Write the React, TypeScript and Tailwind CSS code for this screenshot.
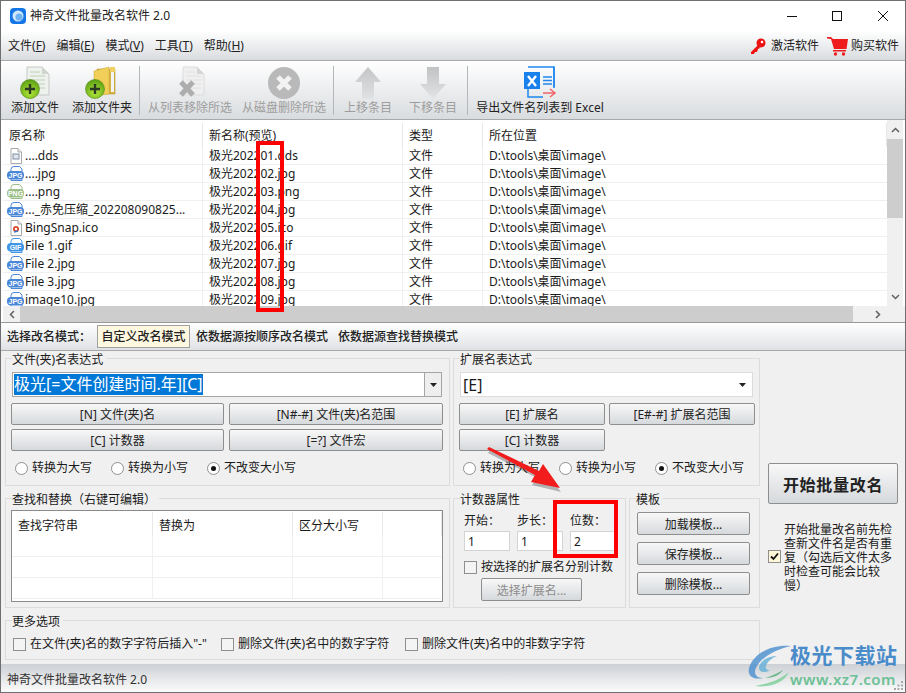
import React from 'react';

// ── Données ────────────────────────────────────────────────────────────────
const rows = [
  { name: '....dds', ext: 'dds', kind: 'doc' },
  { name: '....jpg', ext: 'jpg', kind: 'JPG' },
  { name: '....png', ext: 'png', kind: 'PNG' },
  { name: '..._赤免压缩_202208090825...', ext: 'jpg', kind: 'JPG' },
  { name: 'BingSnap.ico', ext: 'ico', kind: 'ico' },
  { name: 'File 1.gif', ext: 'gif', kind: 'GIF' },
  { name: 'File 2.jpg', ext: 'jpg', kind: 'JPG' },
  { name: 'File 3.jpg', ext: 'jpg', kind: 'JPG' },
  { name: 'image10.jpg', ext: 'jpg', kind: 'JPG' },
];

const btnShell =
  'flex items-center justify-center rounded-[2px] border border-[#8e8e8e] bg-gradient-to-b from-[#f8f8f8] to-[#d6d9dc] pt-[2px]';
const btnClass = `${btnShell} text-[#222]`;

// ── Icônes ─────────────────────────────────────────────────────────────────
const FileIcon = ({ kind }: { kind: string }) => {
  if (kind === 'doc' || kind === 'ico') {
    return (
      <svg width="17" height="16" viewBox="-1 0 17 16" className="shrink-0">
        <path d="M3 .5h7l3.500 3.500v11.500H3z" fill="#fff" stroke="#a9a9a9" />
        <path d="M10 .5V4h3.500" fill="#eee" stroke="#a9a9a9" />
        {kind === 'doc' ? (
          <rect x="5" y="6" width="6" height="5" fill="#dfe6ee" stroke="#7d8ea3" />
        ) : (
          <>
            <circle cx="8" cy="9" r="3" fill="#d9482b" />
            <circle cx="8" cy="9" r="1.200" fill="#fff" />
            <path d="M6 12l4-1" stroke="#3a78c8" strokeWidth="1.500" />
          </>
        )}
      </svg>
    );
  }
  const color = kind === 'PNG' ? '#9cc08a' : kind === 'GIF' ? '#3f95e6' : '#4a86d8';
  return (
    <svg width="17" height="16" viewBox="0 0 17 16" className="shrink-0">
      <path d="M4 6V3.500Q4 .5 7 .5h5.500L15 3v3" fill="#fff" stroke={color} />
      <path d="M4 13v1.500h11V13" fill="#fff" stroke={color} />
      <rect x="0" y="5" width="17" height="8.500" rx="4" fill={color} />
      <text x="8.500" y="11.800" textAnchor="middle" fontSize="7" fontWeight="700" fill="#fff" fontFamily="Liberation Sans, sans-serif">
        {kind}
      </text>
    </svg>
  );
};

const GreenPlus = ({ cx, cy }: { cx: number; cy: number }) => (
  <g>
    <circle cx={cx} cy={cy} r="9.500" fill="url(#green-ball)" stroke="#4c8a12" strokeWidth="0.600" />
    <path d={`M${cx - 5} ${cy}h10M${cx} ${cy - 5}v10`} stroke="#2c3a24" strokeWidth="2.400" />
  </g>
);

const GreenDefs = () => (
  <defs>
    <radialGradient id="green-ball" cx="50%" cy="70%" r="70%">
      <stop offset="0%" stopColor="#b4e83c" />
      <stop offset="100%" stopColor="#5a9e12" />
    </radialGradient>
  </defs>
);

const AddFileIcon = () => (
  <svg width="32" height="33" viewBox="0 0 32 33">
    <GreenDefs />
    <path d="M8 1h15l7 7v21H8z" fill="#eef1ee" stroke="#c5c9c5" />
    <path d="M23 1v7h7z" fill="#cfd5cf" />
    <path d="M11 6h10M11 10h15M11 14h15M11 18h15M11 22h15" stroke="#b8d4b0" />
    <GreenPlus cx={11} cy={23} />
  </svg>
);

const AddFolderIcon = () => (
  <svg width="34" height="33" viewBox="0 0 34 33">
    <GreenDefs />
    <path d="M12 3h18v25H12z" fill="#d8b440" stroke="#a88a2a" strokeWidth="0.500" />
    <path d="M25 1h5v5h-5z" fill="#f0d060" />
    <path d="M9 5l15-4v27l-15 2z" fill="#f2cf58" stroke="#c7a53a" strokeWidth="0.500" />
    <path d="M26 6h3v20h-3z" fill="#f4f4f4" />
    <GreenPlus cx={10} cy={23} />
  </svg>
);

const RemoveListIcon = () => (
  <svg width="32" height="33" viewBox="0 0 32 33">
    <path d="M9 1h14l7 7v21H9z" fill="#efefef" stroke="#dcdcdc" />
    <path d="M23 1v7h7z" fill="#d6d6d6" />
    <path d="M12 6h9M12 10h15M12 14h15M12 18h15M12 22h15" stroke="#e0e0e0" />
    <path d="M7 16l12 13M19 16L7 29" stroke="#adadad" strokeWidth="5" />
  </svg>
);

const RemoveDiskIcon = () => (
  <svg width="32" height="32" viewBox="0 0 32 32">
    <circle cx="16" cy="16" r="16" fill="#b9b9b9" />
    <path d="M10 10l12 12M22 10L10 22" stroke="#f2f2f2" strokeWidth="5" />
  </svg>
);

const ArrowGrayIcon = ({ down }: { down?: boolean }) => (
  <svg width="26" height="32" viewBox="0 0 26 32" className={down ? 'rotate-180' : ''}>
    <defs>
      <linearGradient id={down ? 'arrow-d' : 'arrow-u'} x1="0" y1="0" x2="0" y2="1">
        <stop offset="0%" stopColor={down ? '#e2e4e6' : '#c2c4c6'} />
        <stop offset="100%" stopColor={down ? '#c0c2c4' : '#e0e2e4'} />
      </linearGradient>
    </defs>
    <path d="M13 0l13 15h-7v17H7V15H0z" fill={`url(#${down ? 'arrow-d' : 'arrow-u'})`} />
  </svg>
);

const ExcelIcon = () => (
  <svg width="34" height="33" viewBox="0 0 34 33">
    <path d="M5 1h26v20M5 22v9h15" fill="none" stroke="#1f87ee" strokeWidth="1.500" />
    <path d="M31 1v21" stroke="#1f87ee" strokeWidth="1.500" />
    <rect x="1" y="6" width="16" height="17" fill="#1a80ec" />
    <path d="M5 10l8 10M13 10l-8 10" stroke="#fff" strokeWidth="2.400" />
    <path d="M20 11h9M20 14.500h9M20 18h9" stroke="#1f87ee" strokeWidth="1.500" />
    <path d="M20 27h12M27 23l5 4-5 4" fill="none" stroke="#f0646a" strokeWidth="1.500" />
  </svg>
);

const KeyIcon = () => (
  <svg width="16" height="16" viewBox="0 0 16 16">
    <circle cx="11" cy="5" r="4.500" fill="#ee1111" />
    <circle cx="12" cy="4" r="1.300" fill="#fff" />
    <path d="M8 7L1 14v2h3l1-2h2l1-3 2-1z" fill="#ee1111" />
  </svg>
);

const CartIcon = () => (
  <svg width="21" height="20" viewBox="0 0 21 20">
    <path d="M0 1h4l2 2h15l-1.500 10H7L4 3 0 2.500z" fill="#ee1c1c" />
    <rect x="6" y="14" width="13" height="1.500" fill="#ee1c1c" />
    <circle cx="8.500" cy="18" r="1.700" fill="#ee1c1c" />
    <circle cx="16.500" cy="18" r="1.700" fill="#ee1c1c" />
  </svg>
);

const Radio = ({ label, checked }: { label: string; checked?: boolean }) => (
  <div className="flex w-[96px] items-center gap-[4px]">
    <span className="flex h-[13px] w-[13px] items-center justify-center rounded-full border border-[#8f8f8f] bg-white">
      {checked && <span className="h-[5px] w-[5px] rounded-full bg-[#111]" />}
    </span>
    <span>{label}</span>
  </div>
);

const Check = ({ label }: { label: string }) => (
  <div className="flex items-center gap-[4px]">
    <span className="h-[13px] w-[13px] border border-[#8f8f8f] bg-[#f4f4f4]" />
    <span>{label}</span>
  </div>
);

// ── Cadre de groupe avec légende sur la bordure ────────────────────────────
const Group = ({ title, className, children }: { title: string; className: string; children: React.ReactNode }) => (
  <div className={`border border-[#dcdcdc] ${className}`}>
    <div className="ml-[6px] -mt-[7px] h-[14px] w-fit bg-[#f0f0f0] pr-[3px] leading-[16px]">{title}</div>
    {children}
  </div>
);

const Tool = ({ w, label, off, children }: { w: string; label: string; off?: boolean; children: React.ReactNode }) => (
  <div className={`flex flex-col items-center ${w}`}>
    <div className="flex h-[33px] items-center justify-center">{children}</div>
    <div className={`mt-[1px] leading-[16px] whitespace-nowrap ${off ? 'text-[#9d9d9d]' : 'text-[#222]'}`}>{label}</div>
  </div>
);

const Menu = ({ name, k }: { name: string; k: string }) => (
  <span>
    {name}(<span className="underline">{k}</span>)
  </span>
);

// ── App ────────────────────────────────────────────────────────────────────
const App: React.FC = () => {
  return (
    <div className="relative flex h-[693px] w-[906px] flex-col overflow-hidden border border-[#6f6f6f] bg-[#f0f0f0] text-[12px] text-[#1a1a1a] [font-family:'Noto_Sans','Noto_Sans_CJK_SC',sans-serif]">
      {/* Barre de titre */}
      <div className="flex h-[30px] shrink-0 items-center bg-white pl-[9px]">
        <svg width="16" height="16" viewBox="0 0 16 16">
          <rect width="16" height="16" rx="4" fill="#1476e6" />
          <circle cx="8" cy="8" r="5.500" fill="#cfe6fb" />
          <circle cx="9" cy="9" r="3.500" fill="#6fb2f0" />
        </svg>
        <span className="ml-[4px] text-[#222]">神奇文件批量改名软件 2.0</span>
        <div className="ml-auto flex items-center pr-[16px]">
          <svg width="12" height="12" viewBox="0 0 12 12" className="mr-[33px]">
            <path d="M1 6.500h10" stroke="#111" />
          </svg>
          <svg width="12" height="12" viewBox="0 0 12 12" className="mr-[34px]">
            <rect x="1.500" y="1.500" width="9" height="9" fill="none" stroke="#111" />
          </svg>
          <svg width="12" height="12" viewBox="0 0 12 12">
            <path d="M1 1l10 10M11 1L1 11" stroke="#111" />
          </svg>
        </div>
      </div>

      {/* Menu */}
      <div className="flex h-[30px] shrink-0 items-center border-b border-[#a9a9a9] bg-gradient-to-b from-white to-[#d9dcdf] pl-[7px] pt-[1px] text-[#222]">
        <div className="flex gap-[11px]">
          <Menu name="文件" k="F" />
          <Menu name="编辑" k="E" />
          <Menu name="模式" k="V" />
          <Menu name="工具" k="T" />
          <Menu name="帮助" k="H" />
        </div>
        <div className="ml-auto flex items-center pr-[6px]">
          <KeyIcon />
          <span className="ml-[5px]">激活软件</span>
          <span className="ml-[8px]">
            <CartIcon />
          </span>
          <span className="ml-[3px]">购买软件</span>
        </div>
      </div>

      {/* Barre d'outils */}
      <div className="flex h-[59px] shrink-0 items-start border-b border-[#a9a9a9] bg-gradient-to-b from-white to-[#d9dcdf] pl-[3px] pt-[5px]">
        <Tool w="w-[62px]" label="添加文件">
          <AddFileIcon />
        </Tool>
        <Tool w="w-[72px]" label="添加文件夹">
          <AddFolderIcon />
        </Tool>
        <div className="ml-[1px] h-[49px] w-px bg-[#b5b8bb]" />
        <Tool w="w-[100px]" label="从列表移除所选" off>
          <RemoveListIcon />
        </Tool>
        <Tool w="w-[88px]" label="从磁盘删除所选" off>
          <RemoveDiskIcon />
        </Tool>
        <div className="ml-[5px] h-[49px] w-px bg-[#b5b8bb]" />
        <Tool w="w-[68px]" label="上移条目" off>
          <ArrowGrayIcon />
        </Tool>
        <Tool w="w-[62px]" label="下移条目" off>
          <ArrowGrayIcon down />
        </Tool>
        <div className="ml-[3px] h-[49px] w-px bg-[#b5b8bb]" />
        <Tool w="w-[144px]" label="导出文件名列表到 Excel">
          <ExcelIcon />
        </Tool>
      </div>

      {/* Liste des fichiers */}
      <div className="flex h-[203px] shrink-0 flex-col border-b border-[#9a9a9a] bg-white pl-[2px]">
        <div className="flex h-[186px] shrink-0">
          <div className="w-[884px] shrink-0 overflow-hidden">
            <div className="grid h-[27px] grid-cols-[200px_200px_80px_1fr] items-end">
              {['原名称', '新名称(预览)', '类型', '所在位置'].map((h) => (
                <div key={h} className="flex h-[24px] items-center border-r border-[#e8e8e8] pl-[6px] pt-[2px]">
                  {h}
                </div>
              ))}
            </div>
            {rows.map((r, i) => (
              <div key={i} className="grid h-[18px] grid-cols-[200px_200px_80px_1fr] items-center border-b border-[#f0f0f0]">
                <div className="flex items-center gap-[1px] border-r border-[#f0f0f0] pl-[4px] leading-[17px] whitespace-nowrap">
                  <FileIcon kind={r.kind} />
                  <span>{r.name}</span>
                </div>
                <div className="border-r border-[#f0f0f0] pl-[6px] leading-[17px]">
                  极光2022{String(i + 1).padStart(2, '0')}.{r.ext}
                </div>
                <div className="border-r border-[#f0f0f0] pl-[6px] leading-[17px]">文件</div>
                <div className="pl-[6px] leading-[17px]">D:\tools\桌面\image\</div>
              </div>
            ))}
          </div>
          <div className="flex w-[16px] shrink-0 flex-col items-center bg-[#f0f0f0]">
            <div className="flex h-[19px] w-full items-center justify-center">
              <svg width="9" height="6" viewBox="0 0 9 6">
                <path d="M1 5l3.500-3.500L8 5" fill="none" stroke="#606060" strokeWidth="1.500" />
              </svg>
            </div>
            <div className="h-[79px] w-full bg-[#cdcdcd]" />
            <div className="mt-auto flex h-[18px] w-full items-center justify-center">
              <svg width="9" height="6" viewBox="0 0 9 6">
                <path d="M1 1l3.500 3.500L8 1" fill="none" stroke="#606060" strokeWidth="1.500" />
              </svg>
            </div>
          </div>
        </div>
        <div className="flex h-[16px] shrink-0 items-center bg-[#f0f0f0]">
          <div className="flex h-full w-[17px] items-center justify-center">
            <svg width="6" height="9" viewBox="0 0 6 9">
              <path d="M5 1L1.500 4.500 5 8" fill="none" stroke="#606060" strokeWidth="1.500" />
            </svg>
          </div>
          <div className="h-full w-[833px] bg-[#cdcdcd]" />
          <div className="flex h-full w-[50px] items-center justify-start pl-[22px]">
            <svg width="6" height="9" viewBox="0 0 6 9">
              <path d="M1 1l3.500 3.500L1 8" fill="none" stroke="#606060" strokeWidth="1.500" />
            </svg>
          </div>
        </div>
      </div>

      {/* Mode de renommage */}
      <div className="flex h-[28px] shrink-0 items-center border-b border-[#a9a9a9] bg-gradient-to-b from-white to-[#dfe2e5] pl-[6px] font-medium text-[#222]">
        <span className="w-[90px]">选择改名模式：</span>
        <span className="flex h-[23px] w-[93px] items-center justify-center border border-[#a0a0a0] bg-[#fff8e0]">自定义改名模式</span>
        <span className="ml-[6px]">依数据源按顺序改名模式</span>
        <span className="ml-[10px]">依数据源查找替换模式</span>
      </div>

      {/* Panneau principal */}
      <div className="flex flex-1 pl-[4px] pt-[7px]">
        <div className="flex w-[755px] shrink-0 flex-col">
          {/* Expressions */}
          <div className="flex h-[128px] gap-[3px]">
            <Group title="文件(夹)名表达式" className="w-[445px]">
              <div className="pl-[5px]">
                <div className="ml-[1px] mt-[6px] flex h-[25px] w-[430px] border border-[#a5a5a5] bg-white">
                  <div className="flex flex-1 items-center pl-[1px] text-[16px]">
                    <span className="bg-[#0078d7] leading-[21px] text-white">极光[=文件创建时间.年][C]</span>
                  </div>
                  <div className="flex w-[17px] items-center justify-center border-l border-[#a5a5a5] bg-[#eeeeee]">
                    <svg width="7" height="4" viewBox="0 0 7 4">
                      <path d="M0 0h7L3.500 4z" fill="#222" />
                    </svg>
                  </div>
                </div>
                <div className="mt-[6px] grid w-[432px] grid-cols-[213px_214px] gap-x-[5px] gap-y-[4px]">
                  <div className={`${btnClass} h-[22px]`}>[N] 文件(夹)名</div>
                  <div className={`${btnClass} h-[22px]`}>[N#-#] 文件(夹)名范围</div>
                  <div className={`${btnClass} h-[22px]`}>[C] 计数器</div>
                  <div className={`${btnClass} h-[22px]`}>[=?] 文件宏</div>
                </div>
                <div className="mt-[8px] flex pl-[4px]">
                  <Radio label="转换为大写" />
                  <Radio label="转换为小写" />
                  <Radio label="不改变大小写" checked />
                </div>
              </div>
            </Group>
            <Group title="扩展名表达式" className="w-[307px]">
              <div className="pl-[5px]">
                <div className="ml-[1px] mt-[6px] flex h-[25px] w-[293px] items-center border border-[#dcdcdc] bg-white pl-[2px] text-[16px]">
                  <span>[E]</span>
                  <svg width="7" height="4" viewBox="0 0 7 4" className="ml-auto mr-[6px]">
                    <path d="M0 0h7L3.500 4z" fill="#222" />
                  </svg>
                </div>
                <div className="mt-[6px] grid w-[296px] grid-cols-[146px_146px] gap-x-[4px] gap-y-[4px]">
                  <div className={`${btnClass} h-[22px]`}>[E] 扩展名</div>
                  <div className={`${btnClass} h-[22px]`}>[E#-#] 扩展名范围</div>
                  <div className={`${btnClass} h-[22px]`}>[C] 计数器</div>
                </div>
                <div className="mt-[8px] flex pl-[4px]">
                  <Radio label="转换为大写" />
                  <Radio label="转换为小写" />
                  <Radio label="不改变大小写" checked />
                </div>
              </div>
            </Group>
          </div>

          {/* Rechercher, compteur, modèles */}
          <div className="mt-[12px] flex h-[110px] gap-[3px]">
            <Group title="查找和替换（右键可编辑）" className="w-[445px]">
              <div className="ml-[5px] mt-[4px] h-[92px] w-[432px] overflow-hidden border border-[#8a8a8a] bg-white">
                <div className="grid h-[25px] grid-cols-[141px_140px_90px_1fr] items-center">
                  {['查找字符串', '替换为', '区分大小写', ''].map((h, i) => (
                    <div key={i} className="flex h-[24px] items-center border-r border-[#e8e8e8] pl-[6px] pt-[4px]">
                      {h}
                    </div>
                  ))}
                </div>
                {[0, 1, 2].map((i) => (
                  <div key={i} className="grid h-[21px] grid-cols-[141px_140px_90px_1fr] border-b border-[#f0f0f0]">
                    <div className="border-r border-[#f0f0f0]" />
                    <div className="border-r border-[#f0f0f0]" />
                    <div className="border-r border-[#f0f0f0]" />
                    <div />
                  </div>
                ))}
              </div>
            </Group>
            <Group title="计数器属性" className="w-[173px]">
              <div className="pl-[10px]">
                <div className="mt-[6px] grid w-[153px] grid-cols-[46px_46px_46px] gap-x-[7px]">
                  <span className="leading-[18px]">开始：</span>
                  <span className="leading-[18px]">步长：</span>
                  <span className="leading-[18px]">位数：</span>
                  {['1', '1', '2'].map((v, i) => (
                    <div key={i} className="mt-[1px] flex h-[20px] items-center border border-[#d4d4d4] bg-white pl-[3px] pt-[1px]">
                      {v}
                    </div>
                  ))}
                </div>
                <div className="mt-[7px]">
                  <Check label="按选择的扩展名分别计数" />
                </div>
                <div className={`${btnShell} ml-[17px] mt-[2px] h-[23px] w-[101px] text-[#8d8d8d]`}>选择扩展名...</div>
              </div>
            </Group>
            <Group title="模板" className="w-[131px]">
              <div className="ml-[7px] flex flex-col gap-[7px] pt-[6px]">
                <div className={`${btnClass} h-[23px] w-[113px]`}>加载模板...</div>
                <div className={`${btnClass} h-[23px] w-[113px]`}>保存模板...</div>
                <div className={`${btnClass} h-[23px] w-[113px]`}>删除模板...</div>
              </div>
            </Group>
          </div>

          {/* Plus d'options */}
          <Group title="更多选项" className="mt-[12px] h-[40px] w-[755px]">
            <div className="flex pl-[7px] pt-[7px]">
              <div className="w-[208px]">
                <Check label={'在文件(夹)名的数字字符后插入"-"'} />
              </div>
              <div className="w-[184px]">
                <Check label="删除文件(夹)名中的数字字符" />
              </div>
              <Check label="删除文件(夹)名中的非数字字符" />
            </div>
          </Group>
        </div>

        {/* Colonne droite */}
        <div className="ml-[8px] flex w-[130px] flex-col">
          <div className={`${btnClass} mt-[105px] h-[41px] w-[130px] text-[16px] font-bold tracking-[0.7px] text-[#111]`}>开始批量改名</div>
          <div className="mt-[19px] flex items-start">
            <span className="mt-[27px] flex h-[13px] w-[13px] shrink-0 items-center justify-center border border-[#8f8f8f] bg-[#fff6d8]">
              <svg width="9" height="9" viewBox="0 0 9 9">
                <path d="M1 4.500l2.500 2.500L8 1.500" fill="none" stroke="#111" strokeWidth="1.800" />
              </svg>
            </span>
            <div className="ml-[3px] leading-[14px] whitespace-nowrap">
              开始批量改名前先检
              <br />
              查新文件名是否有重
              <br />
              复（勾选后文件太多
              <br />
              时检查可能会比较
              <br />
              慢）
            </div>
          </div>
        </div>
      </div>

      {/* Barre d'état */}
      <div className="relative flex h-[28px] shrink-0 items-center bg-gradient-to-b from-[#cdd1d5] to-[#fbfbfb] pl-[6px] pt-[4px] text-[#333]">
        神奇文件批量改名软件 2.0
        <svg width="11" height="11" viewBox="0 0 11 11" className="absolute bottom-[1px] right-[1px]">
          <path d="M8 1h2v2H8zM4.500 4.500h2v2h-2zM8 4.500h2v2H8zM1 8h2v2H1zM4.500 8h2v2h-2zM8 8h2v2H8z" fill="#a8a8a8" />
        </svg>
      </div>

      {/* Annotations par-dessus la capture */}
      <div className="absolute left-[255px] top-[140px] h-[171px] w-[28px] border-[4px] border-[#ff0000]" />
      <div className="absolute left-[552px] top-[499px] h-[58px] w-[65px] border-[4px] border-[#ff0000]" />
      <svg width="80" height="46" viewBox="0 0 80 46" className="absolute left-[484px] top-[446px]">
        <path d="M3 4L52 29l-5 7 29 7-18-23-4 6L5 1z" fill="#000" opacity="0.25" transform="translate(0 2)" />
        <path d="M2 2L50 28l-4 7 29 6-17-24-4 7L4 0z" fill="#f21c1c" />
      </svg>

      {/* Filigrane */}
      <div className="absolute left-[746px] top-[641px] flex items-start">
        <svg width="46" height="46" viewBox="0 0 46 46" className="opacity-80">
          <path d="M44 4C24 2 6 12 2 26c-2 9 6 12 14 10C8 36 6 30 10 24 16 14 30 7 44 4z" fill="#4a8fd0" />
          <path d="M30 14c-10 0-18 6-18 12 0 5 7 5 11 2-3 0-5-1-4-4 1-4 6-8 11-10z" fill="#63b0d8" />
          <path d="M8 44c16 2 30-4 34-14-8 7-18 11-34 14z" fill="#7ccf9a" />
          <path d="M18 36c8 0 15-3 18-8-2 1-10 6-18 8z" fill="#4fae78" />
        </svg>
        <div className="ml-[-3px] flex flex-col">
          <span className="text-[21px] leading-[26px] font-bold tracking-[0.5px] text-[#4a8bc9]">极光下载站</span>
          <span className="mt-[1px] text-[15px] leading-[20px] font-semibold tracking-[0.5px] text-[#6cc095]">www.xz7.com</span>
        </div>
      </div>
    </div>
  );
};

export default App;
